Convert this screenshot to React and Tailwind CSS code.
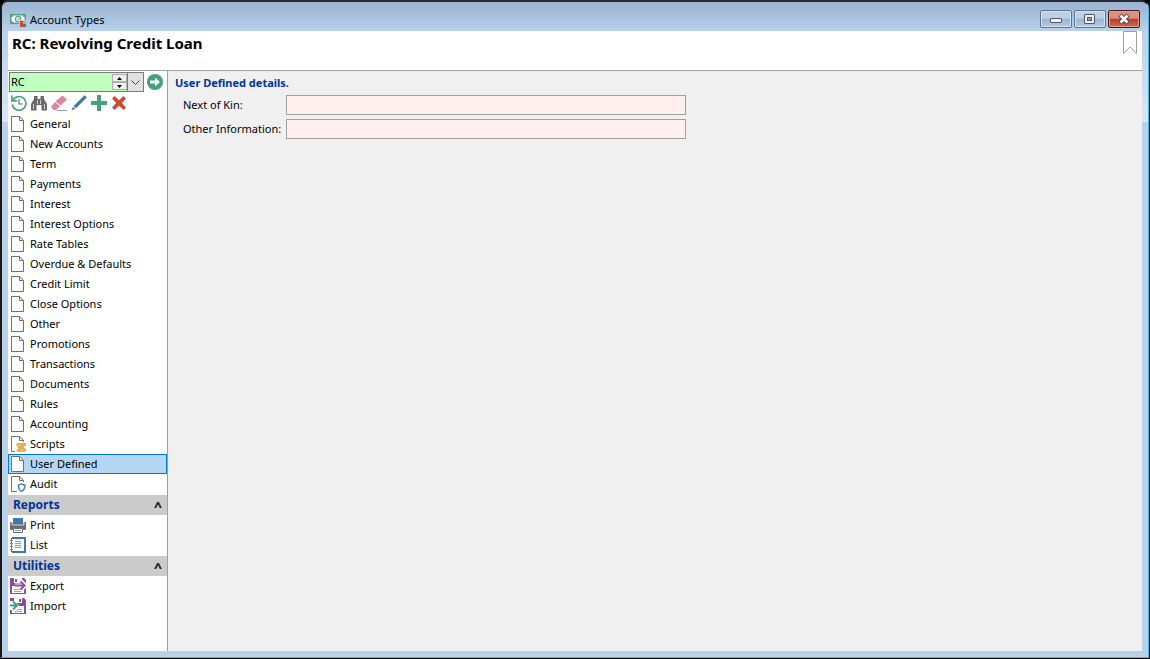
import { useState } from 'react';

function MoneyIcon() {
  return (
    <svg className="w-4 h-4 shrink-0" viewBox="0 0 16 16">
      <rect x="0" y="2" width="16" height="10" fill="#4fa382" />
      <path d="M3 3.5h10a1.5 1.5 0 0 0 1.5 1.5v4A1.5 1.5 0 0 0 13 10.5H3A1.5 1.5 0 0 0 1.5 9V5A1.5 1.5 0 0 0 3 3.5z" fill="#fff" />
      <circle cx="8" cy="7" r="2.6" fill="none" stroke="#4fa382" strokeWidth="1.2" />
      <path d="M7 7h2.5" stroke="#4fa382" />
      <rect x="9" y="8" width="7" height="7" fill="#b9cde5" />
      <rect x="10" y="9" width="3" height="3" fill="#d24a2c" />
      <rect x="13" y="9" width="3" height="3" fill="#e9a94b" />
      <rect x="10" y="12" width="3" height="3" fill="#d24a2c" />
      <rect x="13" y="12" width="3" height="3" fill="#3b76b8" />
    </svg>
  );
}

function PageIcon({ badge }) {
  return (
    <svg className="w-4 h-4 shrink-0" viewBox="0 0 16 16" fill="none">
      <path d="M1.5 .5H9.5L13.5 4.5V15.5H1.5z" fill="#fff" stroke="#707070" />
      <path d="M9.5 .5V4.5H13.5" stroke="#707070" />
      {badge === 'script' && (
        <>
          <path d="M5 6h11v10H5z" fill="#fff" />
          <path d="M8 7h6.500a1.500 1.500 0 0 1 1.500 3h-2.500l1 2.500H16c.3 2-.5 3.500-2 3.500H9a1.800 1.800 0 0 1-1.800-3H8.500L7.500 10H6.500C6 8.500 6.500 7 8 7z" fill="#e9a94b" />
          <path d="M8.500 9.200h2.500M11 14h2.500" stroke="#fff" strokeWidth=".5" />
        </>
      )}
      {badge === 'shield' && (
        <>
          <path d="M7 6h9v10H7z" fill="#fff" />
          <path d="M8.500 9c1.200 0 2-.4 3-1.200 1 .8 1.800 1.200 3.500 1.200.2 3-.9 5-3.500 6.500C9.100 14 8.300 12 8.500 9z" fill="#fff" stroke="#3f78b5" strokeWidth="1.300" />
        </>
      )}
    </svg>
  );
}

function PrintIcon() {
  return (
    <svg className="w-4 h-4 shrink-0" viewBox="0 0 16 16">
      <path d="M0 5h2v1h12V5h2v7a1 1 0 0 1-1 1h-2v-2H3v2H1a1 1 0 0 1-1-1z" fill="#6d6d6d" />
      <path d="M3 1h10v6H3z" fill="#3b78b5" />
      <path d="M2 5v3h12V5" fill="none" stroke="#fff" strokeWidth=".7" />
      <path d="M3.500 11.500h9v4h-9z" fill="#fff" stroke="#6d6d6d" />
      <path d="M5 13.500h6" stroke="#9a9a9a" />
    </svg>
  );
}

function ListIcon() {
  return (
    <svg className="w-4 h-4 shrink-0" viewBox="0 0 16 16" fill="none">
      <path d="M2 1h13v14H2" fill="#fff" stroke="#3b78b5" strokeWidth="2" />
      <path d="M1.500 1v14" stroke="#3b78b5" />
      <path d="M0 3.500h3M0 6.500h3M0 9.500h3M0 12.500h3" stroke="#8a8a8a" />
      <path d="M5 4.500h6M5 6.500h6M5 8.500h6M5 10.500h6" stroke="#9a9a9a" />
    </svg>
  );
}

function ExportIcon() {
  return (
    <svg className="w-4 h-4 shrink-0" viewBox="0 0 16 16" fill="none">
      <path d="M0 0h14l2 2v14H0z" fill="#8a4fa3" />
      <path d="M4 0h8v5H4zM2 8h12v7H2z" fill="#fff" />
      <path d="M5 1h2v3H5z" fill="#8a4fa3" />
      <path d="M4 11.500h6M4 13.500h7" stroke="#a0a0a0" />
      <path d="M5 7.500h9" stroke="#fff" strokeWidth="4" />
      <path d="M11 3l4.500 4.500L11 12" stroke="#fff" strokeWidth="4" />
      <path d="M5 7.500h9M10.500 3.500l4 4-4 4" stroke="#8a4fa3" strokeWidth="2" />
    </svg>
  );
}

function ImportIcon() {
  return (
    <svg className="w-4 h-4 shrink-0" viewBox="0 0 16 16" fill="none">
      <path d="M0 0h14l2 2v14H0z" fill="#8a4fa3" />
      <path d="M4 0h8v5H4zM2 8h12v7H2z" fill="#fff" />
      <path d="M9 1h2v3H9z" fill="#6d6d6d" />
      <path d="M7 11.500h5M5 13.500h7" stroke="#a0a0a0" />
      <path d="M0 3h4l5 4.500L4 12H0z" fill="#fff" />
      <path d="M0 7.500h6M3 3.500l4 4-4 4" stroke="#45a07c" strokeWidth="2" />
    </svg>
  );
}

const toolbar = [
  {
    name: 'History',
    icon: (
      <>
        <path d="M2 5A6.900 6.900 0 1 1 1.200 9.500" stroke="#4fa382" strokeWidth="1.700" />
        <path d="M.8 .5v5.300h5.400" stroke="#4fa382" strokeWidth="1.700" />
        <path d="M8 4v5h4" stroke="#707070" strokeWidth="1.200" />
      </>
    ),
  },
  {
    name: 'Find',
    icon: (
      <>
        <path d="M3 1h3.500v3h3V1H13v3l3 5v6.500h-5.500V10h-5v5.500H0V9l3-5z" fill="#686868" />
        <path d="M6.500 5v4M9.500 5v4M2.500 9v5M13.500 9v5" stroke="#fff" strokeWidth=".7" />
      </>
    ),
  },
  {
    name: 'Clear',
    icon: (
      <>
        <path d="M11.500 .5L16 4.500 9.500 10.500 4.500 6.500z" fill="#e5839a" />
        <path d="M4 7L9 11 5 15H2.500L0 12z" fill="#e5839a" />
        <path d="M4.200 6.700l5 4.100" stroke="#fff" strokeWidth=".6" />
        <path d="M6 15.500h10" stroke="#9a9a9a" />
      </>
    ),
  },
  {
    name: 'Edit',
    icon: (
      <>
        <path d="M13.500 .3L15.800 2.500 5 13.300 2.700 11z" fill="#3b78b5" />
        <path d="M2.200 11.700l2 2L.3 15.600z" fill="#3b78b5" />
      </>
    ),
  },
  { name: 'Add', icon: <path d="M6 0h4v6h6v4h-6v6H6v-6H0V6h6z" fill="#45a07c" /> },
  { name: 'Delete', icon: <path d="M3.500 1L8 5.200 12.500 1 15 3.500 10.800 8l4.200 4.500-2.500 2.500L8 10.800 3.500 15 1 12.500 5.200 8 1 3.500z" fill="#cf4a30" /> },
];

const pages = [
  'General', 'New Accounts', 'Term', 'Payments', 'Interest', 'Interest Options', 'Rate Tables',
  'Overdue & Defaults', 'Credit Limit', 'Close Options', 'Other', 'Promotions', 'Transactions',
  'Documents', 'Rules', 'Accounting', 'Scripts', 'User Defined', 'Audit',
];

const badges = { Scripts: 'script', Audit: 'shield' };

function NavItem({ icon, label, selected, onClick }) {
  return (
    <button
      onClick={onClick}
      className={`flex items-center gap-1 w-full h-5 pl-px border text-left ${selected ? 'bg-[#b3d7f3] border-[#0078d7]' : 'border-transparent'}`}
    >
      {icon}
      <span>{label}</span>
    </button>
  );
}

function Section({ title, children }) {
  const [open, setOpen] = useState(true);
  return (
    <section className="pt-px">
      <button
        onClick={() => setOpen(!open)}
        className="flex items-center justify-between w-full h-5 pl-[5px] pr-1 bg-[#cbcbcb] text-[12px] font-bold text-[#003399]"
      >
        {title}
        <svg className={`w-[10px] h-2 ${open ? '' : 'rotate-180'}`} viewBox="0 0 10 8">
          <path d="M1 7L4 1h2l3 6H6.800L5 3.500 3.200 7z" fill="#333" />
        </svg>
      </button>
      {open && children}
    </section>
  );
}

function WindowButton({ label, close, children }) {
  return (
    <button
      aria-label={label}
      className={`flex items-center justify-center w-8 h-[18px] rounded-xs border ring-1 ring-inset ${
        close
          ? 'border-[#4a1620] ring-[#e0a090] bg-linear-to-b from-[#d99180] from-45% via-[#b83a26] via-50% to-[#cf6a50]'
          : 'border-[#5d7390] ring-[#d5e2f0] bg-linear-to-b from-[#bdd0e6] from-45% via-[#9bb5d2] via-50% to-[#b4cbe4]'
      }`}
    >
      <svg className="w-4 h-3" viewBox="0 0 16 12" fill="none">{children}</svg>
    </button>
  );
}

function Field({ id, label }) {
  return (
    <>
      <label htmlFor={id}>{label}</label>
      <input id={id} type="text" className="h-5 w-full px-1 bg-[#ffefef] border border-[#a0a0a0] outline-none" />
    </>
  );
}

export default function App() {
  const [page, setPage] = useState('User Defined');
  const [code, setCode] = useState('RC');

  return (
    <div className="bg-black min-h-screen flex pb-px pr-px">
      <div className="flex-1 flex flex-col bg-[linear-gradient(#b9d1ea_31px,#dbe7f5_120px,#b9d1ea_120px)] border border-t-2 border-l-2 border-[#33c4e8] border-t-[#2b2b33] border-l-[#1a1a1a] rounded-t-lg px-[6px] pb-[6px] font-['Noto_Sans','Open_Sans',sans-serif] text-[11px] leading-4 text-black">
        <header className="-mx-[6px] flex items-center justify-between h-[29px] px-2 pt-[7px] rounded-t-lg bg-linear-to-b from-[#99b4d1] to-[#b9d1ea]">
          <div className="flex items-center gap-1">
            <MoneyIcon />
            <h1>Account Types</h1>
          </div>
          <div className="flex gap-[2px] pb-[3px]">
            <WindowButton label="Minimize">
              <rect x="2.500" y="5.500" width="11" height="4" rx=".5" fill="#f4f4f4" stroke="#4d5566" />
            </WindowButton>
            <WindowButton label="Maximize">
              <rect x="2.500" y="1.500" width="10" height="9" rx=".5" fill="#f4f4f4" stroke="#4d5566" />
              <rect x="5.500" y="4.500" width="4" height="3" fill="#8ba6c6" stroke="#4d5566" />
            </WindowButton>
            <WindowButton label="Close" close>
              <path d="M4 2l8 8M12 2l-8 8" stroke="#4d4050" strokeWidth="4.500" />
              <path d="M4.500 2.500l7 7M11.500 2.500l-7 7" stroke="#f6f6f6" strokeWidth="2.600" />
            </WindowButton>
          </div>
        </header>

        <div className="flex items-start justify-between h-10 pl-1 pr-1 bg-white border-b border-[#a0a0a0]">
          <h2 className="text-[15px] leading-6 font-bold">RC: Revolving Credit Loan</h2>
          <button aria-label="Bookmark">
            <svg className="w-4 h-6" viewBox="0 0 16 24" fill="none">
              <path d="M1.500 .5h13v22L8 16l-6.500 6.500z" fill="#fff" stroke="#a0a0a0" />
            </svg>
          </button>
        </div>

        <div className="flex-1 flex">
          <aside className="w-40 shrink-0 bg-white border-r border-[#a0a0a0]">
            <div className="flex items-center gap-[3px] pt-px pl-px">
              <div className="flex w-[135px] h-5 border border-[#7a7a7a] bg-[#c0ffc0]">
                <input
                  aria-label="Account type"
                  value={code}
                  onChange={(e) => setCode(e.target.value)}
                  className="flex-1 min-w-0 pl-px outline-none"
                />
                <div className="flex flex-col justify-between w-[15px] py-px">
                  <button aria-label="Previous" className="flex items-center justify-center h-2 border border-[#adadad] bg-[#f0f0f0]">
                    <svg className="w-[5px] h-[3px]" viewBox="0 0 5 3"><path d="M0 3L2.500 0 5 3z" /></svg>
                  </button>
                  <button aria-label="Next" className="flex items-center justify-center h-2 border border-[#adadad] bg-[#f0f0f0]">
                    <svg className="w-[5px] h-[3px]" viewBox="0 0 5 3"><path d="M0 0L2.500 3 5 0z" /></svg>
                  </button>
                </div>
                <button aria-label="Open list" className="flex items-center justify-center w-4 border-l border-[#7a7a7a] bg-[#e1e1e1]">
                  <svg className="w-[9px] h-[5px]" viewBox="0 0 9 5" fill="none"><path d="M.5 .5l4 4 4-4" stroke="#444" /></svg>
                </button>
              </div>
              <button aria-label="Go">
                <svg className="w-4 h-4" viewBox="0 0 16 16">
                  <circle cx="8" cy="8" r="8" fill="#45a07c" />
                  <path d="M3 6.500h5V3.500L13 8l-5 4.500v-3H3z" fill="#fff" />
                </svg>
              </button>
            </div>

            <div className="flex items-center gap-1 h-[22px] pl-[3px]">
              {toolbar.map((t) => (
                <button key={t.name} aria-label={t.name}>
                  <svg className="w-4 h-4" viewBox="0 0 16 16" fill="none">{t.icon}</svg>
                </button>
              ))}
            </div>

            <nav>
              {pages.map((p) => (
                <NavItem
                  key={p}
                  label={p}
                  icon={<PageIcon badge={badges[p]} />}
                  selected={p === page}
                  onClick={() => setPage(p)}
                />
              ))}
              <Section title="Reports">
                <NavItem label="Print" icon={<PrintIcon />} />
                <NavItem label="List" icon={<ListIcon />} />
              </Section>
              <Section title="Utilities">
                <NavItem label="Export" icon={<ExportIcon />} />
                <NavItem label="Import" icon={<ImportIcon />} />
              </Section>
            </nav>
          </aside>

          <main className="flex-1 bg-[#f0f0f0] px-[7px] pt-1">
            <h3 className="font-bold text-[#003399]">User Defined details.</h3>
            <form className="grid grid-cols-[99px_minmax(0,400px)] items-center gap-x-1 gap-y-1 pt-1 pl-2 whitespace-nowrap">
              <Field id="kin" label="Next of Kin:" />
              <Field id="other" label="Other Information:" />
            </form>
          </main>
        </div>
      </div>
    </div>
  );
}
